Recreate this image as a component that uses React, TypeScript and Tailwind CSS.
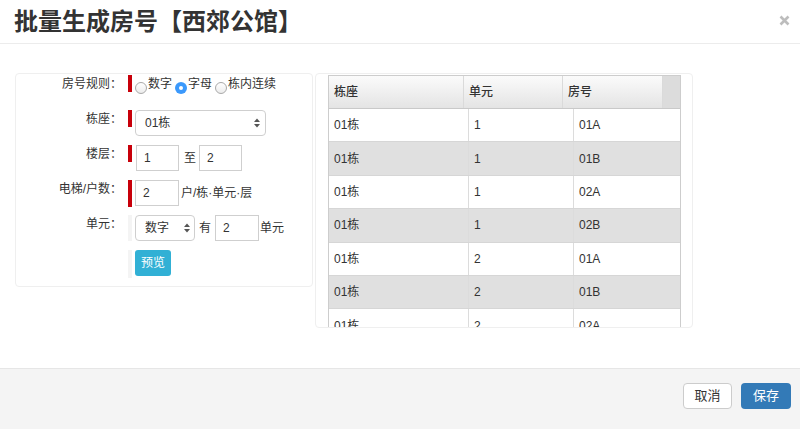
const rows = [
  ["01栋", "1", "01A"],
  ["01栋", "1", "01B"],
  ["01栋", "1", "02A"],
  ["01栋", "1", "02B"],
  ["01栋", "2", "01A"],
  ["01栋", "2", "01B"],
  ["01栋", "2", "02A"],
];

function Arrows() {
  return (
    <svg width="6" height="10" viewBox="0 0 6 10" className="shrink-0">
      <path d="M0 4 L3 0.5 L6 4 Z" fill="#555" />
      <path d="M0 6 L3 9.5 L6 6 Z" fill="#555" />
    </svg>
  );
}

function Radio({ checked, label }: { checked?: boolean; label: string }) {
  return (
    <div className="flex items-start">
      {checked ? (
        <span className="mt-[7px] flex h-[12px] w-[12px] items-center justify-center rounded-full bg-[#3b99fc]">
          <span className="h-[4px] w-[4px] rounded-full bg-white" />
        </span>
      ) : (
        <span className="mt-[7px] h-[12px] w-[12px] rounded-full border border-[#a9a9a9] bg-gradient-to-b from-white to-[#ececec]" />
      )}
      <span className="ml-[1px] leading-[18px]">{label}</span>
    </div>
  );
}

function Row({
  label,
  bar,
  barH,
  children,
}: {
  label: string;
  bar: "red" | "gray";
  barH: string;
  children: React.ReactNode;
}) {
  return (
    <div className="flex h-[26px] items-start">
      <div className="w-[106px] text-right leading-[18px] text-[#333]">{label}</div>
      <div
        className={
          "ml-[6px] w-[4px] " +
          (bar === "red" ? "bg-[#c8000a] " : "bg-[#f4f4f4] ") +
          barH
        }
      />
      <div className="ml-[3px] flex items-center">{children}</div>
    </div>
  );
}

export default function App() {
  return (
    <div className="flex h-[429px] w-[800px] flex-col bg-white font-['Liberation_Sans','Noto_Sans_CJK_SC',sans-serif] text-[12px] text-[#333]">
      <div className="flex h-[44px] shrink-0 items-center justify-between border-b border-[#ececec] pl-[14px] pr-[10px]">
        <h1 className="text-[24px] font-semibold leading-none text-[#333]">批量生成房号【西郊公馆】</h1>
        <svg width="11" height="11" viewBox="0 0 11 11" className="mb-[3px]">
          <path d="M1.5 1.5 L9.5 9.5 M9.5 1.5 L1.5 9.5" stroke="#bdbdbd" strokeWidth="2.6" />
        </svg>
      </div>

      <div className="flex flex-1 items-start px-[15px] pt-[29px]">
        <div className="flex h-[214px] w-[298px] flex-col gap-[9px] rounded-[4px] border border-[#efefef] pt-[1px]">
          <Row label="房号规则：" bar="red" barH="h-[17px]">
            <div className="flex items-start gap-[3px]">
              <Radio label="数字" />
              <Radio checked label="字母" />
              <Radio label="栋内连续" />
            </div>
          </Row>
          <Row label="栋座：" bar="red" barH="h-[17px]">
            <div className="flex h-[26px] w-[131px] items-center justify-between rounded-[4px] border border-[#cfcfcf] pl-[9px] pr-[5px]">
              <span>01栋</span>
              <Arrows />
            </div>
          </Row>
          <Row label="楼层：" bar="red" barH="h-[17px]">
            <div className="ml-[1px] flex h-[26px] w-[43px] items-center border border-[#cfcfcf] pl-[7px]">1</div>
            <span className="ml-[5px] mr-[3px]">至</span>
            <div className="flex h-[26px] w-[43px] items-center border border-[#cfcfcf] pl-[7px]">2</div>
          </Row>
          <Row label="电梯/户数：" bar="red" barH="h-[27px]">
            <div className="flex h-[26px] w-[44px] items-center border border-[#cfcfcf] pl-[7px]">2</div>
            <span className="ml-[2px]">户/栋·单元·层</span>
          </Row>
          <Row label="单元：" bar="gray" barH="h-[26px]">
            <div className="flex h-[26px] w-[60px] items-center justify-between rounded-[4px] border border-[#cfcfcf] pl-[9px] pr-[4px]">
              <span>数字</span>
              <Arrows />
            </div>
            <span className="mx-[4px]">有</span>
            <div className="flex h-[26px] w-[44px] items-center border border-[#cfcfcf] pl-[7px]">2</div>
            <span className="ml-[1px]">单元</span>
          </Row>
          <Row label="" bar="gray" barH="h-[28px]">
            <button className="h-[26px] w-[36px] rounded-[3px] bg-[#31b0d5] text-[12px] text-white">预览</button>
          </Row>
        </div>

        <div className="ml-[2px] h-[255px] w-[378px] overflow-hidden rounded-[4px] border border-[#efefef] pl-[12px] pt-[1px]">
          <div className="h-[254px] w-[353px] overflow-hidden border-x border-t border-[#cdcdcd]">
            <div className="grid h-[33px] grid-cols-[135px_99px_100px_17px] border-b border-[#c9c9c9]">
              {["栋座", "单元", "房号"].map((h) => (
                <div
                  key={h}
                  className="flex items-center border-r border-[#dadada] bg-gradient-to-b from-[#fbfbfb] to-[#e4e4e4] pl-[5px] font-medium text-[#333]"
                >
                  {h}
                </div>
              ))}
              <div className="bg-[#dcdcdc]" />
            </div>
            {rows.map((r, i) => (
              <div
                key={i}
                className={
                  "grid h-[33.4px] grid-cols-[140px_105px_106px] border-b border-[#d6d6d6] " +
                  (i % 2 === 1 ? "bg-[#e0e0e0]" : "bg-white")
                }
              >
                {r.map((c, j) => (
                  <div
                    key={j}
                    className={
                      "flex items-center pl-[5px] " + (j < 2 ? "border-r border-[#dcdcdc]" : "")
                    }
                  >
                    {c}
                  </div>
                ))}
              </div>
            ))}
          </div>
        </div>
      </div>

      <div className="flex h-[61px] shrink-0 items-start justify-end gap-[9px] border-t border-[#e6e6e6] bg-[#f4f4f4] pr-[9px] pt-[14px]">
        <button className="h-[26px] w-[49px] rounded-[4px] border border-[#cccccc] bg-white text-[13px] text-[#333]">取消</button>
        <button className="h-[26px] w-[50px] rounded-[4px] bg-[#337ab7] text-[13px] text-white">保存</button>
      </div>
    </div>
  );
}
